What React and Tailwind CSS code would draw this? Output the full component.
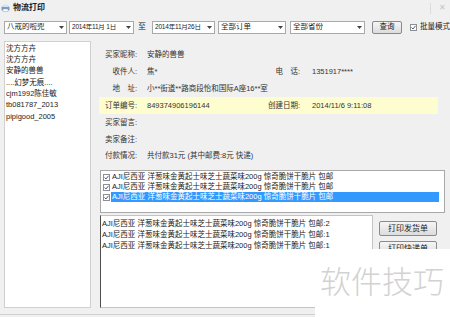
import React from 'react';

const FONT = { fontFamily: '"Liberation Sans","Noto Sans CJK SC",sans-serif' };

const buyers = [
  '沈方方卉',
  '沈方方卉',
  '安静的兽兽',
  '....幻梦无痕....',
  'cjm1992陈佳敏',
  'tb081787_2013',
  'pipigood_2005',
];

const product = 'AJI尼西亚 洋葱味金黄起士味芝士蔬菜味200g 惊奇脆饼干脆片 包邮';

const Select = ({ text, w, size = '' }) => (
  <div className={`flex items-center h-[13px] bg-white border border-[#a9a9a9] pl-[2px] pr-[2px] ${w}`}>
    <span className={`flex-1 whitespace-nowrap overflow-hidden ${size}`}>{text}</span>
    <svg width="5" height="3" viewBox="0 0 5 3" className="shrink-0">
      <path d="M0 0 H5 L2.5 3 Z" fill="#444" />
    </svg>
  </div>
);

const Check = () => (
  <div className="w-[7px] h-[7px] bg-white border border-[#8e8f8f] flex items-center justify-center shrink-0">
    <svg width="5" height="5" viewBox="0 0 5 5">
      <path d="M0.5 2.5 L2 4 L4.5 0.8" fill="none" stroke="#4a5f97" strokeWidth="1" />
    </svg>
  </div>
);

const Row = ({ label, value, label2, value2, h = 'h-[17px]', bg = '' }) => (
  <div className={`flex items-center ${h} ${bg}`}>
    <div className="w-[38px] text-right text-[#333] whitespace-pre">{label}</div>
    <div className="ml-[10px] w-[113px] whitespace-nowrap text-[#333]">{value}</div>
    {label2 && <div className="w-[40px] text-right text-[#333] whitespace-pre">{label2}</div>}
    {value2 && <div className="ml-[12px] whitespace-nowrap text-[#333]">{value2}</div>}
  </div>
);

export default function App() {
  return (
    <div className="w-[450px] h-[317px] relative overflow-hidden bg-[#f0f0f0] text-[7.5px] text-[#222] leading-none" style={FONT}>
      {/* title bar */}
      <div className="h-[16px] flex items-center pl-[1px]">
        <svg width="9" height="8" viewBox="0 0 9 8">
          <rect x="0.5" y="2.5" width="8" height="4" rx="1" fill="#7d9cc4" />
          <rect x="2" y="0.5" width="5" height="2.5" fill="#d9e3ef" />
          <rect x="2" y="5" width="5" height="2.5" fill="#ffffff" stroke="#8aa2c2" strokeWidth="0.5" />
        </svg>
        <span className="ml-[3px] font-bold text-[8px] text-[#222]">物流打印</span>
        <div className="ml-auto flex items-center mr-[4px]">
          <div className="w-px h-[11px] bg-[#dcdcdc]" />
          <span className="ml-[8px] text-[8px] text-[#c4c4c4]">✕</span>
        </div>
      </div>

      {/* toolbar */}
      <div className="h-[22px] flex items-center pl-[4px]">
        <Select text="八戒的啦兜" w="w-[63px]" />
        <div className="ml-[2px]"><Select text="2014年11月 1日" w="w-[65px]" size="text-[6.5px] tracking-[-0.2px]" /></div>
        <span className="ml-[4px] w-[9px] text-[8px]">至</span>
        <div className="ml-[5px]"><Select text="2014年11月26日" w="w-[63px]" size="text-[6.5px] tracking-[-0.2px]" /></div>
        <div className="ml-[3px]"><Select text="全部订单" w="w-[68px]" /></div>
        <div className="ml-[4px]"><Select text="全部省份" w="w-[75px]" /></div>
        <div className="ml-[7px] w-[30px] h-[13px] border border-[#8a8a8a] rounded-[2px] bg-gradient-to-b from-[#f6f6f6] to-[#dcdcdc] flex items-center justify-center">
          查询
        </div>
        <div className="ml-[8px]"><Check /></div>
        <span className="ml-[3px]">批量模式</span>
      </div>

      {/* body */}
      <div className="flex">
        <div className="ml-[4px] mt-[3px] w-[87px] h-[267px] bg-white border border-[#d0d0d0] pt-[1px] pl-[1px]">
          {buyers.map((b, i) => (
            <div key={i} className="h-[11.3px] flex items-center whitespace-nowrap text-[#222]">{b}</div>
          ))}
        </div>

        <div className="ml-[8px] flex flex-col w-[346px]">
          <div className="pt-[8px]">
            <Row label="买家昵称:" value="安静的兽兽" />
            <Row label="收件人:" value="焦*" label2="电　话:" value2="1351917****" />
            <Row label="地　址:" value="小**街道**路商段怡和国际A座16**室" />
            <div className="w-[339px]">
              <Row label="订单编号:" value="849374906196144" label2="创建日期:" value2="2014/11/6 9:11:08" bg="bg-[#fdfdcf]" />
            </div>
            <Row label="买家留言:" value="" />
            <Row label="卖家备注:" value="" h="h-[18px]" />
            <Row label="付款情况:" value="共付款31元 (其中邮费:8元 快递)" h="h-[14px]" />
          </div>

          <div className="mt-[7px] ml-[1px] w-[345px] h-[43px] bg-white border border-[#a8a8a8] pt-[1px] pl-[2px]">
            {[0, 1, 2].map((i) => (
              <div key={i} className="h-[10px] flex items-center">
                <Check />
                <div className={`ml-[1px] mr-[5px] flex-1 h-[10px] flex items-center pl-[1px] whitespace-nowrap ${i === 2 ? 'bg-[#3399ff] text-white' : ''}`}>
                  {product}
                </div>
              </div>
            ))}
          </div>

          <div className="mt-[2px] ml-[1px] flex">
            <div className="w-[273px] h-[93px] bg-white border border-[#c4c4c4] border-l-[#4d4d4d] pt-[2px] pl-[1px]">
              {['2', '1', '1'].map((n, i) => (
                <div key={i} className="h-[11px] flex items-center whitespace-nowrap">{product}:{n}</div>
              ))}
            </div>
            <div className="ml-[6px] flex flex-col">
              <div className="mt-[6px] w-[58px] h-[15px] border border-[#8a8a8a] rounded-[2px] bg-gradient-to-b from-[#f6f6f6] to-[#dcdcdc] flex items-center justify-center text-[8px]">
                打印发货单
              </div>
              <div className="mt-[5px] w-[58px] h-[15px] border border-[#8a8a8a] rounded-[2px] bg-gradient-to-b from-[#f6f6f6] to-[#dcdcdc] flex items-center justify-center text-[8px]">
                打印快递单
              </div>
            </div>
          </div>
        </div>
      </div>

      <div className="mt-[6px] w-[315px] h-px bg-[#cfcfcf]" />

      {/* watermark overlay */}
      <div className="absolute left-[315px] top-[249px] w-[135px] h-[68px] bg-white">
        <div className="pl-[5px] pt-[15px] text-[31px] leading-none font-light text-[#d2d2d2] whitespace-nowrap" style={{ fontFamily: '"Noto Sans CJK SC",sans-serif' }}>
          软件技巧
        </div>
      </div>
    </div>
  );
}
